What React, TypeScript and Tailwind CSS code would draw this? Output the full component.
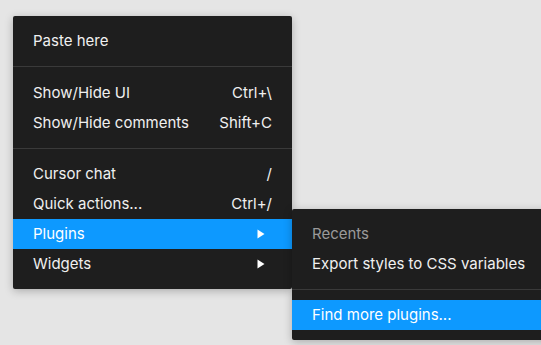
import React from "react";

const Arrow = () => (
  <svg width="8" height="10" viewBox="0 0 8 10" className="block">
    <path d="M0.5 0.5 L7.5 5 L0.5 9.5 Z" fill="#ffffff" />
  </svg>
);

type RowProps = { label: string; right?: React.ReactNode; active?: boolean; muted?: boolean };

const Row = ({ label, right, active, muted }: RowProps) => (
  <div
    className={`flex h-[30px] items-center justify-between pl-[20px] pr-[20px] ${
      active ? "bg-[#0d99ff] text-white" : muted ? "text-[#9a9a9a]" : "text-[#f0f0f0]"
    }`}
  >
    <span>{label}</span>
    {right !== undefined && <span className="flex items-center">{right}</span>}
  </div>
);

const Sep = ({ wide }: { wide?: boolean }) => (
  <div className={wide ? "pt-[10px] pb-[11px]" : "py-[10px]"}>
    <div className="h-px bg-[#3a3a3a]" />
  </div>
);

export default function App() {
  return (
    <div
      className="relative h-[345px] w-[541px] overflow-hidden bg-[#e5e5e5] text-[15px]"
      style={{ fontFamily: "Inter, 'Noto Sans', sans-serif" }}
    >
      <div className="absolute left-[13px] top-[16px] w-[279px] rounded-[2px] bg-[#1e1e1e] pt-[10px] pb-[10px] shadow-[0_2px_8px_rgba(0,0,0,0.25)]">
        <Row label="Paste here" />
        <Sep wide />
        <Row label="Show/Hide UI" right="Ctrl+\" />
        <Row label="Show/Hide comments" right="Shift+C" />
        <Sep />
        <Row label="Cursor chat" right="/" />
        <Row label="Quick actions..." right="Ctrl+/" />
        <div className="flex h-[30px] items-center justify-between bg-[#0d99ff] pl-[20px] pr-[27px] text-white">
          <span>Plugins</span>
          <Arrow />
        </div>
        <div className="flex h-[30px] items-center justify-between pl-[20px] pr-[27px] text-[#f0f0f0]">
          <span>Widgets</span>
          <Arrow />
        </div>
      </div>
      <div className="absolute left-[292px] top-[209px] w-[270px] rounded-[2px] bg-[#1e1e1e] pt-[10px] pb-[10px] shadow-[0_2px_8px_rgba(0,0,0,0.25)]">
        <Row label="Recents" muted />
        <Row label="Export styles to CSS variables" />
        <Sep />
        <Row label="Find more plugins..." active />
      </div>
    </div>
  );
}
